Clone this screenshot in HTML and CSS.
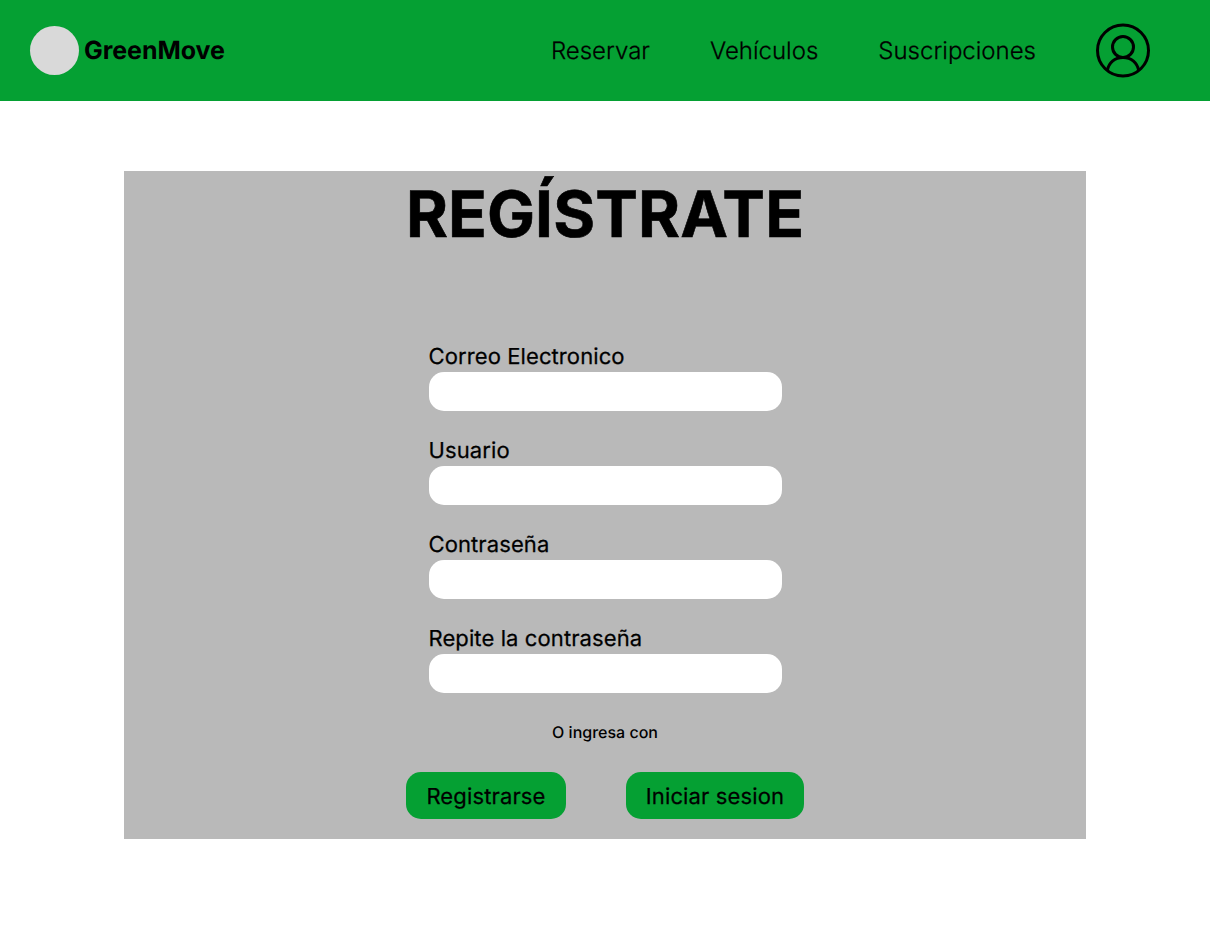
FILE: index.html
```html
<!DOCTYPE html>
<html lang="es">
<head>
<meta charset="utf-8">
<title>GreenMove</title>
<link rel="stylesheet" href="styles.css">
</head>
<body>
<header class="topbar">
  <a class="brand"><span class="logo"></span><span class="brand-name">GreenMove</span></a>
  <nav class="nav">
    <a>Reservar</a>
    <a>Vehículos</a>
    <a>Suscripciones</a>
    <svg class="avatar" viewBox="0 0.5 54 54" fill="none" stroke="#000" stroke-width="3">
      <circle cx="27" cy="27" r="25.5"/>
      <circle cx="27" cy="23.500" r="10.500"/>
      <path d="M11.300 47C12.700 39.500 18.500 34 27 34S41.300 39.500 42.700 47"/>
    </svg>
  </nav>
</header>
<main class="card">
  <h1 class="title">REGÍSTRATE</h1>
  <form class="form">
    <label class="field"><span>Correo Electronico</span><input class="input" type="email"></label>
    <label class="field"><span>Usuario</span><input class="input" type="text"></label>
    <label class="field"><span>Contraseña</span><input class="input" type="password"></label>
    <label class="field"><span>Repite la contraseña</span><input class="input" type="password"></label>
  </form>
  <p class="alt">O ingresa con</p>
  <div class="actions">
    <button class="button">Registrarse</button>
    <button class="button">Iniciar sesion</button>
  </div>
</main>
</body>
</html>
```
FILE: styles.css
```css
* { box-sizing: border-box; }
body { margin: 0; background: #fff; color: #000; font-family: Inter, sans-serif; text-rendering: geometricPrecision; }
.topbar { height: 101px; padding: 0 60px 0 30px; background: #05a033; display: flex; align-items: center; justify-content: space-between; }
.brand { display: flex; align-items: center; gap: 5px; }
.logo { width: 49px; height: 49px; border-radius: 50%; background: #d9d9d9; }
.brand-name { padding-top: 2px; font-size: 25px; font-weight: 700; line-height: 29px; letter-spacing: -0.05px; }
.nav { display: flex; align-items: center; gap: 60px; font-size: 24px; font-weight: 300; line-height: 29px; -webkit-text-stroke: 0.25px #000; }
.avatar { width: 54px; height: 54px; display: block; overflow: visible; }
.card { width: 962px; height: 668px; margin: 70px auto 0; background: #b9b9b9; display: flex; flex-direction: column; align-items: center; }
.title { margin: 5px 0 0; font-size: 64px; font-weight: 700; line-height: 77px; letter-spacing: 0.1px; -webkit-text-stroke: 0.6px #000; }
.form { width: 353px; margin-top: 91px; display: flex; flex-direction: column; gap: 26px; }
.field { display: flex; flex-direction: column; gap: 1px; font-size: 22px; font-weight: 400; line-height: 27px; letter-spacing: 0.1px; -webkit-text-stroke: 0.25px #000; }
.field .input { height: 39px; padding: 0 14px; border: 0; border-radius: 15px; background: #fff; font: inherit; }
.field + .field { padding-top: 1px; }
.alt { margin: 30px 0 0; font-size: 16px; font-weight: 500; line-height: 19px; }
.actions { display: grid; grid-template-columns: 160px 178px; gap: 60px; margin-top: 30px; }
.button { height: 47px; padding: 3px 0 0; border: 0; border-radius: 15px; background: #05a033; color: #000; font: 400 22px/27px Inter, sans-serif; letter-spacing: 0.14px; text-rendering: inherit; -webkit-text-stroke: 0.25px #000; }
```
